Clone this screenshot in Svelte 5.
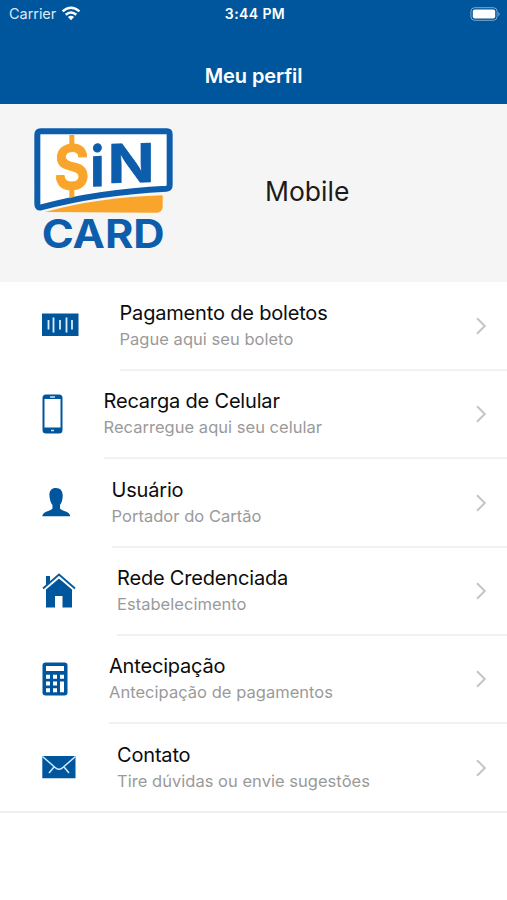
<script>
  const rows = [
    { icon: 'barcode', x: 119.5, title: 'Pagamento de boletos', sub: 'Pague aqui seu boleto' },
    { icon: 'phone', x: 103.5, title: 'Recarga de Celular', sub: 'Recarregue aqui seu celular' },
    { icon: 'user', x: 111.5, title: 'Usuário', sub: 'Portador do Cartão' },
    { icon: 'home', x: 117, title: 'Rede Credenciada', sub: 'Estabelecimento' },
    { icon: 'calc', x: 109, title: 'Antecipação', sub: 'Antecipação de pagamentos' },
    { icon: 'mail', x: 117, title: 'Contato', sub: 'Tire dúvidas ou envie sugestões' }
  ];
</script>

<div class="screen">
  <header>
    <div class="status">
      <div class="left">
        <span>Carrier</span>
        <svg width="20" height="16" viewBox="0 0 20 16" fill="none" stroke="#fff" stroke-width="2.5">
          <path d="M1.6 5.4Q10-1.8 18.4 5.4M4.7 8.7Q10 4.2 15.3 8.7" />
          <path d="M10 14.2L6.9 11Q10 8.5 13.1 11Z" fill="#fff" stroke="none" />
        </svg>
      </div>
      <span class="time">3:44 PM</span>
      <svg class="battery" width="31" height="14" viewBox="0 0 31 14">
        <rect x=".9" y=".7" width="26.2" height="12.6" rx="3.8" fill="none" stroke="#7fa9d0" stroke-width="1" />
        <rect x="2.8" y="2.6" width="22.4" height="8.8" rx="2" fill="#fff" />
        <path d="M28.4 4.7Q30.8 7 28.4 9.3Z" fill="#7fa9d0" />
      </svg>
    </div>
    <h1>Meu perfil</h1>
  </header>

  <section class="profile">
    <svg width="155" height="145" viewBox="0 0 465 435">
      <path d="M60 276Q220 232 413 226V259Q413 278 394 278Z" fill="#f9a52b" />
      <path d="M47 34L426 34Q434 34 434 43V195Q434 205 424 206Q220 216 48 262Q37 265 37 252V45Q37 34 47 34Z" fill="#fff" stroke="#0c5dac" stroke-width="18" />
      <path d="M133 45H148V78H133ZM133 204H148V231L133 235Z" fill="#f9a52b" />
      <g font-family="Inter, 'Liberation Sans', sans-serif" font-weight="700" fill="#0c5dac">
        <text transform="translate(87 209) skewY(-2)" font-size="184" textLength="106" lengthAdjust="spacingAndGlyphs" fill="#f9a52b" stroke="#f9a52b" stroke-width="3">S</text>
        <text transform="translate(196 201) skewY(-3)" font-size="168" textLength="43" lengthAdjust="spacingAndGlyphs" font-weight="800">i</text>
        <text transform="translate(248 189) skewY(-1.5)" font-size="160" textLength="140" lengthAdjust="spacingAndGlyphs" stroke="#0c5dac" stroke-width="2">N</text>
        <text x="50" y="384" font-size="118" textLength="369" lengthAdjust="spacingAndGlyphs">CARD</text>
      </g>
    </svg>
    <span class="name">Mobile</span>
  </section>

  <ul>
    {#each rows as row}
      <li>
        <div class="icon" style="width: {row.x - 42}px">
          {#if row.icon === 'barcode'}
            <svg width="37" height="25" viewBox="0 0 37 25"><path d="M0 .5H36.5V23H0Z" fill="#00569d" /><path d="M6.5 7V16.5M11.5 4.5V19.5M18 7V16.5M24.5 4.5V19.5M30 7V16.5" stroke="#d8edff" stroke-width="1.8" /></svg>
          {:else if row.icon === 'phone'}
            <svg width="21" height="40" viewBox="0 0 21 40"><rect x=".5" y=".5" width="20" height="39" rx="3.5" fill="#00569d" /><path d="M2.5 5H18.5V33.5H2.5Z" fill="#fff" /><path d="M8 3H13M9 36.5H12" stroke="#c4e2ff" stroke-width="1.5" /></svg>
          {:else if row.icon === 'user'}
            <svg width="29" height="30" viewBox="0 0 29 30"><path d="M14 1C8.5 1 6.8 4.8 7.6 10.3C8 14 9.3 16.5 10.5 18.1V21.4C8 24.8 1 23.6.3 29.3H28.3C27.6 23.6 20.5 24.8 18 21.4V18.1C19.5 16.2 20.4 13.5 20.6 10.3C21.2 4.8 19 1 14 1Z" fill="#00569d" /></svg>
          {:else if row.icon === 'home'}
            <svg width="34" height="36" viewBox="0 0 34 36"><path d="M4 13V3H8V9L17 2L30 16V34.5H20.5V23H13V34.5H4Z" fill="#00569d" /><path d="M1 17L17 3.5L33 17" fill="none" stroke="#fff" stroke-width="3" /><path d="M1 15.5L17 1.5L33 15.5" fill="none" stroke="#075b9f" stroke-width="1.9" /></svg>
          {:else if row.icon === 'calc'}
            <svg width="26" height="34" viewBox="0 0 26 34"><rect x=".5" y=".5" width="25" height="33" rx="3" fill="#00569d" /><path d="M4 4H22V9H4ZM4 12.8H8V16.8H4ZM11 12.8H15V16.8H11ZM18 12.8H22V16.8H18ZM4 19.5H8V23.5H4ZM11 19.5H15V23.5H11ZM4 26.2H8V30.2H4ZM11 26.2H15V30.2H11ZM18 19.5H22V30.2H18Z" fill="#fff" /></svg>
          {:else}
            <svg width="34" height="24" viewBox="0 0 34 24"><path d="M.3 1H33.5V23.2H.3Z" fill="#00569d" /><path d="M.5 1.5L14 13.2Q17 15.5 20 13.2L33.5 1.5M12 12L7 18M22 12L27 18" fill="none" stroke="#d2eaff" stroke-width="1.5" /></svg>
          {/if}
        </div>
        <div class="body">
          <div>
            <div class="title">{row.title}</div>
            <div class="sub">{row.sub}</div>
          </div>
          <svg width="12" height="18" viewBox="0 0 12 18"><path d="M2 1.2L9.8 9L2 16.8" fill="none" stroke="#c5c5c8" stroke-width="2" /></svg>
        </div>
      </li>
    {/each}
  </ul>
</div>

<style>
  .screen {
    width: 507px;
    height: 900px;
    overflow: hidden;
    background: #fff;
    font-family: Inter, 'Liberation Sans', sans-serif;
  }
  header {
    height: 103.5px;
    box-sizing: border-box;
    background: #00569c;
    color: #fff;
  }
  .status {
    display: grid;
    grid-template-columns: 1fr auto 1fr;
    align-items: center;
    height: 27px;
    padding: 0 6px 0 9px;
    font-size: 14.5px;
  }
  .left {
    display: flex;
    align-items: center;
    gap: 5px;
    color: #dce9f5;
    letter-spacing: -0.05px;
  }
  .time {
    font-size: 14px;
    font-weight: 600;
    letter-spacing: 0.4px;
  }
  .battery {
    justify-self: end;
  }
  h1 {
    margin: 37px 0 0;
    font-size: 20px;
    line-height: 25px;
    font-weight: 600;
    letter-spacing: -0.1px;
    text-align: center;
  }
  .profile {
    display: flex;
    align-items: flex-start;
    height: 178.5px;
    box-sizing: border-box;
    padding: 16.5px 0 0 25px;
    background: #f5f5f5;
  }
  .name {
    margin: 54px 0 0 85px;
    font-size: 26.5px;
    line-height: 34px;
    color: #1b1b1b;
  }
  ul {
    margin: 0;
    padding: 0;
    list-style: none;
  }
  li {
    display: flex;
    height: 88.35px;
    padding-left: 42px;
  }
  li:last-child {
    height: 89px;
    box-shadow: inset 0 -2px #f0f0f0;
  }
  .icon {
    display: flex;
    align-items: center;
    flex: none;
    height: 87px;
  }
  .body {
    display: flex;
    flex: 1;
    align-items: center;
    justify-content: space-between;
    box-sizing: border-box;
    height: 89px;
    padding: 1px 20px 0 0;
    border-bottom: 2px solid #f2f2f2;
  }
  li:last-child .body {
    border-bottom-color: #f0f0f0;
  }
  .title {
    font-size: 20px;
    line-height: 26px;
    letter-spacing: -0.18px;
    color: #0c0c0c;
    white-space: nowrap;
  }
  .sub {
    font-size: 16.5px;
    line-height: 26px;
    letter-spacing: 0.03px;
    color: #9a9a9a;
    white-space: nowrap;
  }
</style>
